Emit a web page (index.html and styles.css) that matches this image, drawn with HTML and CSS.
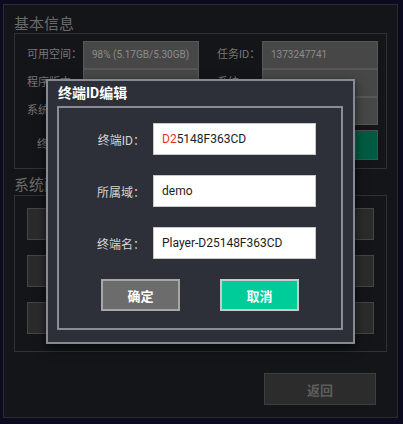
FILE: index.html
```html
<!DOCTYPE html>
<html lang="zh">
<head>
    <meta charset="UTF-8">
    <meta name="viewport" content="width=device-width, initial-scale=1.0">
    <title>终端ID编辑</title>
    <link rel="stylesheet" href="styles.css">
</head>
<body>
    <div class="screen">
        <div class="section-title">基本信息</div>
        <div class="box info">
            <div class="label">可用空间：</div>
            <div class="field">98% (5.17GB/5.30GB)</div>
            <div class="label right">任务ID：</div>
            <div class="field">1373247741</div>

            <div class="label">程序版本</div>
            <div class="field"></div>
            <div class="label right">系统</div>
            <div class="field"></div>

            <div class="label">系统时间</div>
            <div class="field"></div>
            <div class="label right">IP</div>
            <div class="field"></div>

            <div class="label label-wide">终端ID</div>
            <div class="field field-dark"></div>
            <div class="label right"></div>
            <div class="action-cell"><span class="green-btn"></span></div>
        </div>

        <div class="section-title second">系统配置</div>
        <div class="box config">
            <div class="cfg-btn"></div>
            <div class="cfg-btn"></div>
            <div class="cfg-btn"></div>
            <div class="cfg-btn"></div>
            <div class="cfg-btn"></div>
            <div class="cfg-btn"></div>
        </div>

        <div class="footer">
            <button class="back-btn">返回</button>
        </div>
    </div>

    <div class="dialog">
        <div class="dialog-title">终端ID编辑</div>
        <div class="dialog-frame">
            <div class="form-row">
                <label for="termId">终端ID：</label>
                <div class="input" id="termId"><span class="red">D2</span>5148F363CD</div>
            </div>
            <div class="form-row">
                <label for="domain">所属域：</label>
                <div class="input" id="domain">demo</div>
            </div>
            <div class="form-row">
                <label for="termName">终端名：</label>
                <div class="input" id="termName">Player-D25148F363CD</div>
            </div>
            <div class="buttons">
                <button class="btn btn-ok">确定</button>
                <button class="btn btn-cancel">取消</button>
            </div>
        </div>
    </div>
</body>
</html>
```

FILE: styles.css
```css
* {
    box-sizing: border-box;
    margin: 0;
    padding: 0;
}

body {
    font-family: Roboto, "Noto Sans CJK SC", sans-serif;
    background: #0b0a1e;
    width: 403px;
    height: 424px;
    overflow: hidden;
    position: relative;
}

.screen {
    margin: 4px 5px 0 3px;
    height: 414px;
    border: 1px solid #2a2b2f;
    background: #141519;
    padding: 10px 10px 0 10px;
}

.section-title {
    font-size: 15px;
    line-height: 18px;
    color: #6a6a6a;
}

.section-title.second {
    margin-top: 6px;
    line-height: 20px;
}

.box {
    border: 1px solid #303135;
}

.info {
    display: grid;
    grid-template-columns: 56px 116px 63px 116px;
    grid-auto-rows: 28px;
    padding: 7px 8px 8px 12px;
    height: 136px;
}

.info .label {
    font-size: 11px;
    line-height: 28px;
    color: #777;
    white-space: nowrap;
}

.info .label.right {
    padding-left: 18px;
}

.info .label-wide {
    padding-left: 10px;
    margin-top: 6px;
}

.field {
    background: #474747;
    border: 1px solid #575757;
    font-size: 10px;
    line-height: 26px;
    padding-left: 8px;
    color: #8c8c8c;
}

.field-dark {
    background: transparent;
    border: none;
}

.action-cell {
    display: flex;
    justify-content: flex-end;
    padding-top: 5px;
    height: 35px;
}

.green-btn {
    width: 23px;
    height: 30px;
    background: #005b42;
    border: 1px solid #4a4f4d;
}

.config {
    display: grid;
    grid-template-columns: 1fr 1fr;
    column-gap: 18px;
    row-gap: 15px;
    padding: 12px 12px 17px 12px;
    height: 157px;
}

.cfg-btn {
    height: 32px;
    background: #2c2b2b;
    border: 1px solid #454545;
}

.footer {
    display: flex;
    justify-content: flex-end;
    margin-top: 21px;
    padding-right: 11px;
}

.back-btn {
    width: 112px;
    height: 32px;
    background: #2c2c2c;
    border: 1px solid #3e3e3e;
    color: #5d5d5d;
    font-family: inherit;
    font-size: 13px;
    font-weight: bold;
}

/* dialog over the page */
.dialog {
    position: absolute;
    left: 46px;
    top: 79px;
    width: 309px;
    height: 265px;
    background: #2d3039;
    border: 2px solid #858a93;
    box-shadow: 0 4px 10px rgba(0, 0, 0, 0.6);
    padding: 0 10px 12px 9px;
    display: flex;
    flex-direction: column;
}

.dialog-title {
    font-size: 14px;
    font-weight: bold;
    color: #fff;
    line-height: 25px;
    padding-left: 1px;
}

.dialog-frame {
    flex: 1;
    border: 2px solid #898d95;
    padding-top: 15px;
    display: flex;
    flex-direction: column;
    gap: 20px;
}

.form-row {
    display: flex;
    align-items: center;
    gap: 8px;
}

.form-row label {
    width: 86px;
    text-align: right;
    font-size: 12px;
    color: #d6d6d6;
}

.input {
    width: 163px;
    height: 32px;
    background: #fff;
    border: 1px solid #c9c9c9;
    padding-left: 8px;
    font-size: 12px;
    line-height: 30px;
    color: #1c1c1c;
}

.red {
    color: #e8302e;
}

.buttons {
    display: flex;
    justify-content: center;
    gap: 40px;
}

.btn {
    width: 79px;
    height: 32px;
    font-family: inherit;
    font-size: 13px;
    font-weight: bold;
    color: #fff;
    border: 2px solid #a7a7a7;
}

.btn-ok {
    background: #6c6c6c;
}

.btn-cancel {
    background: #00cc99;
    border-color: #c4cccb;
}
```
